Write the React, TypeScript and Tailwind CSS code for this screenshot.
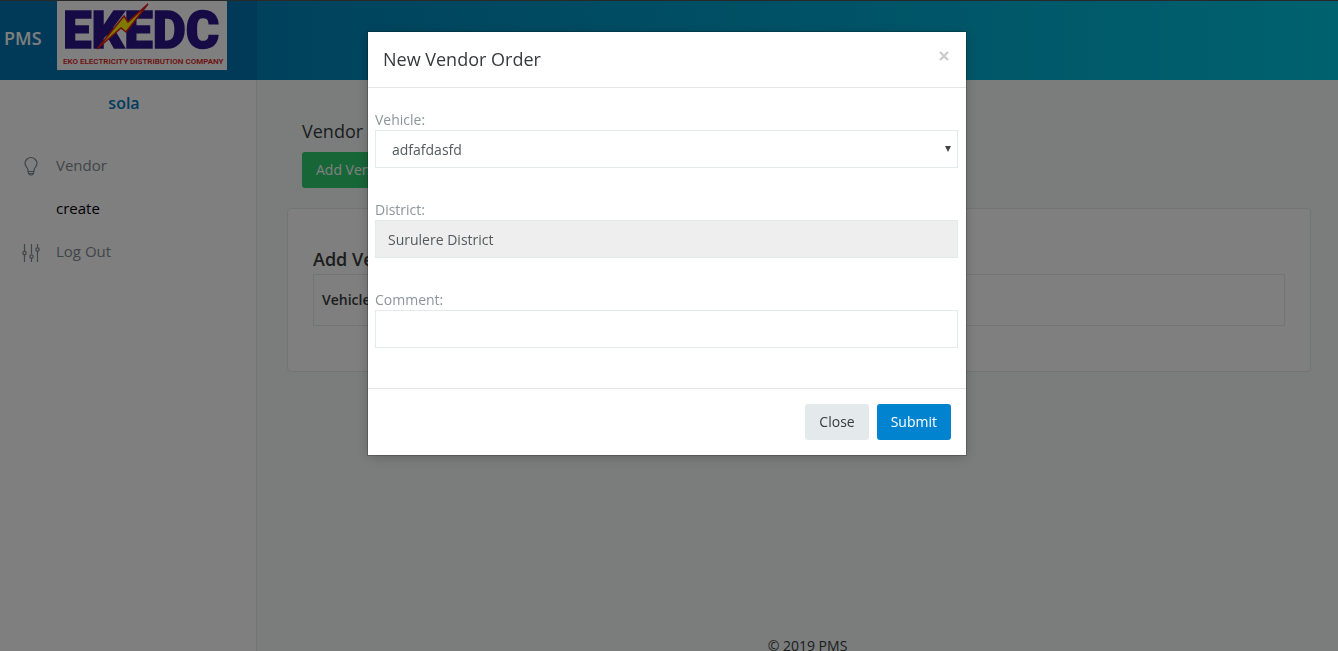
import { useState } from "react";

function Logo() {
  return (
    <svg viewBox="0 0 170 69" className="h-[69px] w-[170px] shrink-0" role="img" aria-label="EKEDC">
      <rect width="170" height="69" fill="#fff" />
      <text
        x="6"
        y="47"
        fontFamily="Roboto, sans-serif"
        fontWeight="900"
        fontSize="51"
        fill="#2c1688"
        stroke="#2c1688"
        strokeWidth="1.5"
      >
        EKEDC
      </text>
      <path
        d="M91 3 L69 31 L64 27 L40 48 L67 15 L71 21 Z"
        fill="#fff200"
        stroke="#e01818"
        strokeWidth="1.5"
        strokeLinejoin="miter"
      />
      <text x="6" y="63" fontFamily="Roboto, sans-serif" fontWeight="600" fontSize="8" fill="#d81e1e">
        EKO ELECTRICITY DISTRIBUTION COMPANY
      </text>
    </svg>
  );
}

function BulbIcon() {
  return (
    <svg viewBox="0 0 20 20" className="h-5 w-5" fill="none" stroke="currentColor" strokeWidth="1.2" aria-hidden="true">
      <path d="M7 15.500V14C7 12 4 10.500 4 7.500a6 6 0 0 1 12 0c0 3-3 4.500-3 6.500v1.500z" />
      <path d="M7.500 15.500v2l1.500 1.500h2l1.500-1.500v-2M7.500 17.500h5" />
    </svg>
  );
}

function SlidersIcon() {
  return (
    <svg viewBox="0 0 20 20" className="h-5 w-5" fill="none" stroke="currentColor" strokeWidth="1.2" aria-hidden="true">
      <path d="M3.500 2v7M3.500 13v7M10.500 2v10M10.500 16v4M16.500 2v3.500M16.500 9v11" />
      <circle cx="3.500" cy="11" r="1.700" />
      <circle cx="10.500" cy="14.500" r="1.700" />
      <circle cx="16.500" cy="7.500" r="1.700" />
    </svg>
  );
}

function Sidebar() {
  return (
    <aside className="w-[257px] shrink-0 border-r border-[#e4eaec] bg-white">
      <p className="pt-[11px] pr-2 text-center text-base leading-6 font-semibold text-[#0275c0]">sola</p>
      <nav className="mt-[29px] text-[15px] leading-[43px] text-[#818a91]">
        <a href="#vendor" className="flex items-center gap-[15px] pl-[21px]">
          <BulbIcon />
          Vendor
        </a>
        <a href="#create" className="block pl-14 text-black">
          create
        </a>
        <a href="#logout" className="flex items-center gap-[15px] pl-[21px]">
          <SlidersIcon />
          Log Out
        </a>
      </nav>
    </aside>
  );
}

function VendorModal({ onClose }: { onClose: () => void }) {
  const field = "block h-[38px] w-full border border-[#e4e9ec] text-sm text-[#55595c] outline-none";
  const label = "block pt-[2px] text-sm leading-5 text-[#8d959b]";
  return (
    <div className="fixed inset-0 flex items-start justify-center overflow-hidden bg-black/50 pt-8 pr-1">
      <form
        role="dialog"
        aria-modal="true"
        aria-labelledby="modal-title"
        onSubmit={(e) => e.preventDefault()}
        className="w-full max-w-[598px] bg-white shadow-[0_0_0_1px_rgba(0,0,0,0.2),0_2px_12px_rgba(0,0,0,0.2)]"
      >
        <div className="flex h-14 items-center justify-between border-b border-[#e5e5e5] px-[15px]">
          <h4 id="modal-title" className="pb-[2px] text-lg text-[#373a3c]">
            New Vendor Order
          </h4>
          <button type="button" aria-label="Close dialog" onClick={onClose} className="mb-2 p-[2px] text-[#c8c8c8]">
            <svg viewBox="0 0 10 10" className="h-[10px] w-[10px]" stroke="currentColor" strokeWidth="2" aria-hidden="true">
              <path d="M1 1l8 8M9 1l-8 8" />
            </svg>
          </button>
        </div>
        <div className="flex flex-col gap-[30px] pt-5 pr-2 pb-10 pl-[7px]">
          <div className="relative">
            <label htmlFor="vehicle" className={label}>
              Vehicle:
            </label>
            <select id="vehicle" className={`${field} appearance-none bg-white px-4 pt-[2px]`}>
              <option>adfafdasfd</option>
            </select>
            <svg viewBox="0 0 6 6" className="pointer-events-none absolute right-[7px] bottom-4 h-[6px] w-[6px]" aria-hidden="true">
              <path d="M0 0h6L3 6z" fill="#444" />
            </svg>
          </div>
          <div>
            <label htmlFor="district" className={label}>
              District:
            </label>
            <input id="district" readOnly defaultValue="Surulere District" className={`${field} bg-[#eeeeee] px-3`} />
          </div>
          <div>
            <label htmlFor="comment" className={label}>
              Comment:
            </label>
            <input id="comment" className={`${field} bg-white px-3`} />
          </div>
        </div>
        <div className="flex justify-end gap-2 border-t border-[#e5e5e5] p-[15px] text-sm">
          <button type="button" onClick={onClose} className="h-9 rounded-[3px] bg-[#e4eaec] px-[14px] text-[#373a3c]">
            Close
          </button>
          <button type="submit" className="h-9 rounded-[3px] bg-[#0283cf] px-[14px] font-medium text-white">
            Submit
          </button>
        </div>
      </form>
    </div>
  );
}

export default function App() {
  const [open, setOpen] = useState(true);
  return (
    <div className="flex h-screen flex-col overflow-hidden bg-[#f7fafa] font-['Open_Sans','Noto_Sans',sans-serif] text-[#373a3c]">
      <header className="flex h-20 shrink-0 border-t border-[#505050] bg-linear-to-r from-[#0275b0] to-[#00c4de]">
        <div className="flex w-[257px] shrink-0 items-start gap-4 bg-[#0275b0] pl-1">
          <span className="w-[37px] pt-[23px] text-lg leading-7 font-semibold text-white">PMS</span>
          <Logo />
        </div>
      </header>
      <div className="flex min-h-0 grow">
        <Sidebar />
        <div className="flex min-w-0 grow flex-col">
          <main className="pt-[39px] pr-[27px] pl-[30px]">
            <div className="pl-[15px]">
              <h2 className="text-lg leading-6">Vendor</h2>
              <button
                type="button"
                onClick={() => setOpen(true)}
                className="mt-[9px] h-9 rounded-[3px] bg-[#2fcc70] px-[14px] text-sm text-white"
              >
                Add Vendor
              </button>
            </div>
            <section className="mt-5 rounded border border-[#e4eaec] bg-white px-[25px] pt-[37px] pb-[45px]">
              <h3 className="pb-px text-lg leading-[27px] font-semibold">Add Vendor</h3>
              <table className="h-[52px] w-full border border-[#e4eaec] text-left text-sm">
                <thead>
                  <tr>
                    <th className="px-2 font-semibold">Vehicle</th>
                  </tr>
                </thead>
              </table>
            </section>
          </main>
          <footer className="mt-auto -mb-[6px] pl-5 text-center text-sm leading-[22px]">© 2019 PMS</footer>
        </div>
      </div>
      {open && <VendorModal onClose={() => setOpen(false)} />}
    </div>
  );
}
